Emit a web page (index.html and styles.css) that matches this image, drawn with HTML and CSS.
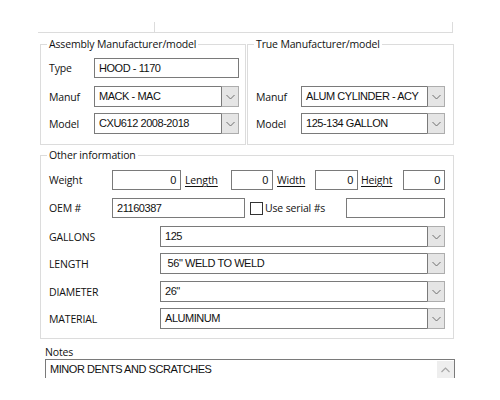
FILE: index.html
```html
<!DOCTYPE html>
<html>
<head>
<meta charset="utf-8">
<link rel="stylesheet" href="styles.css">
</head>
<body>
<div class="stub"><div class="stub-a"></div><div class="stub-b"></div></div>

<div class="groups">
  <fieldset class="grp grp-asm">
    <legend>Assembly Manufacturer/model</legend>
    <div class="row row-text">
      <span class="lbl lbl-45">Type</span>
      <div class="field w145">HOOD - 1170</div>
    </div>
    <div class="row row-combo mt8">
      <span class="lbl lbl-45">Manuf</span>
      <div class="combo w145"><div class="combo-text">MACK - MAC</div><div class="combo-btn"><svg width="9" height="6" viewBox="0 0 9 6"><polyline points="0.5,1 4.5,5 8.5,1" fill="none" stroke="#6e6e6e" stroke-width="1"/></svg></div></div>
    </div>
    <div class="row row-combo mt6">
      <span class="lbl lbl-45">Model</span>
      <div class="combo w145"><div class="combo-text">CXU612 2008-2018</div><div class="combo-btn"><svg width="9" height="6" viewBox="0 0 9 6"><polyline points="0.5,1 4.5,5 8.5,1" fill="none" stroke="#6e6e6e" stroke-width="1"/></svg></div></div>
    </div>
  </fieldset>

  <fieldset class="grp grp-true">
    <legend>True Manufacturer/model</legend>
    <div class="row row-text"></div>
    <div class="row row-combo mt8">
      <span class="lbl lbl-45">Manuf</span>
      <div class="combo w144"><div class="combo-text">ALUM CYLINDER - ACY</div><div class="combo-btn"><svg width="9" height="6" viewBox="0 0 9 6"><polyline points="0.5,1 4.5,5 8.5,1" fill="none" stroke="#6e6e6e" stroke-width="1"/></svg></div></div>
    </div>
    <div class="row row-combo mt6">
      <span class="lbl lbl-45">Model</span>
      <div class="combo w144"><div class="combo-text">125-134 GALLON</div><div class="combo-btn"><svg width="9" height="6" viewBox="0 0 9 6"><polyline points="0.5,1 4.5,5 8.5,1" fill="none" stroke="#6e6e6e" stroke-width="1"/></svg></div></div>
    </div>
  </fieldset>
</div>

<fieldset class="grp other">
  <legend>Other information</legend>
  <div class="row row-text">
    <span class="lbl lbl-63">Weight</span>
    <div class="field num w69">0</div>
    <span class="lbl ul lbl-len">Length</span>
    <div class="field num w42">0</div>
    <span class="lbl ul lbl-wid">Width</span>
    <div class="field num w43">0</div>
    <span class="lbl ul lbl-hei">Height</span>
    <div class="field num w42">0</div>
  </div>
  <div class="row row-text mt8">
    <span class="lbl lbl-63">OEM #</span>
    <div class="field w133">21160387</div>
    <span class="check"></span>
    <span class="lbl lbl-serial">Use serial #s</span>
    <div class="field w99"></div>
  </div>
  <div class="row row-combo mt8">
    <span class="lbl lbl-111">GALLONS</span>
    <div class="combo w285"><div class="combo-text">125</div><div class="combo-btn"><svg width="9" height="6" viewBox="0 0 9 6"><polyline points="0.5,1 4.5,5 8.5,1" fill="none" stroke="#6e6e6e" stroke-width="1"/></svg></div></div>
  </div>
  <div class="row row-combo mt6">
    <span class="lbl lbl-111">LENGTH</span>
    <div class="combo w285"><div class="combo-text pre"> 56" WELD TO WELD</div><div class="combo-btn"><svg width="9" height="6" viewBox="0 0 9 6"><polyline points="0.5,1 4.5,5 8.5,1" fill="none" stroke="#6e6e6e" stroke-width="1"/></svg></div></div>
  </div>
  <div class="row row-combo mt7">
    <span class="lbl lbl-111">DIAMETER</span>
    <div class="combo w285"><div class="combo-text">26"</div><div class="combo-btn"><svg width="9" height="6" viewBox="0 0 9 6"><polyline points="0.5,1 4.5,5 8.5,1" fill="none" stroke="#6e6e6e" stroke-width="1"/></svg></div></div>
  </div>
  <div class="row row-combo mt6">
    <span class="lbl lbl-111">MATERIAL</span>
    <div class="combo w285"><div class="combo-text">ALUMINUM</div><div class="combo-btn"><svg width="9" height="6" viewBox="0 0 9 6"><polyline points="0.5,1 4.5,5 8.5,1" fill="none" stroke="#6e6e6e" stroke-width="1"/></svg></div></div>
  </div>
</fieldset>

<div class="notes-lbl">Notes</div>
<div class="notes">
  <div class="notes-text">MINOR DENTS AND SCRATCHES</div>
  <div class="scroll-up"><svg width="9" height="6" viewBox="0 0 9 6"><polyline points="0.5,5 4.5,1 8.5,5" fill="none" stroke="#a6a6a6" stroke-width="1.2"/></svg></div>
</div>
</body>
</html>
```

FILE: styles.css
```css
* { box-sizing: border-box; }

html, body {
  margin: 0;
  padding: 0;
  background: #ffffff;
}

body {
  width: 500px;
  height: 400px;
  overflow: hidden;
  font-family: "Open Sans", "Noto Sans", sans-serif;
  font-size: 10.5px;
  letter-spacing: -0.15px;
  color: #111111;
}

.stub {
  display: flex;
  margin: 22px 0 0 38px;
  width: 415px;
  height: 11px;
}
.stub-a {
  width: 117px;
  border-right: 1px solid #dcdcdc;
  border-bottom: 1px solid #dcdcdc;
}
.stub-b {
  flex: 1;
  border-right: 1px solid #dcdcdc;
  border-bottom: 1px solid #dcdcdc;
}

.groups {
  display: flex;
  gap: 1px;
  margin: 4px 0 0 40px;
  width: 414px;
}

.grp {
  margin: 0;
  border: 1px solid #dcdcdc;
  min-width: 0;
}
.grp legend {
  padding: 0 2px;
  margin-left: -2px;
  line-height: 14px;
  font-size: 10.5px;
}

.grp-asm {
  width: 206px;
  padding: 7px 6px 10px 8px;
}
.grp-true {
  width: 207px;
  padding: 7px 8px 10px 8px;
}

.other {
  margin: 3px 0 0 40px;
  width: 414px;
  padding: 8px 8px 9px 8px;
}

.row {
  display: flex;
  align-items: center;
}
.row-text { height: 20px; }
.row-combo { height: 21px; }
.mt6 { margin-top: 6px; }
.mt7 { margin-top: 7px; }
.mt8 { margin-top: 8px; }

.lbl {
  flex: none;
  white-space: nowrap;
  line-height: 14px;
}
.lbl-45 { width: 45px; }
.lbl-63 { width: 63px; }
.lbl-111 { width: 111px; }
.lbl-len { width: 50px; padding-left: 4px; }
.lbl-wid { width: 42px; padding-left: 4px; }
.lbl-hei { width: 45px; padding-left: 3px; }
.lbl-serial { flex: 1; padding-left: 2px; }
.ul { text-decoration: underline; text-underline-offset: 2px; }

.field {
  flex: none;
  height: 20px;
  border: 1px solid #7a7a7a;
  background: #fff;
  font-family: "Liberation Sans", Arial, sans-serif;
  font-size: 11px;
  letter-spacing: -0.45px;
  line-height: 18px;
  padding: 0 4px;
  white-space: nowrap;
  overflow: hidden;
}
.num { text-align: right; }

.w42 { width: 42px; }
.w43 { width: 43px; }
.w69 { width: 69px; }
.w99 { width: 99px; }
.w133 { width: 133px; }
.w144 { width: 144px; }
.w145 { width: 145px; }
.w285 { width: 285px; }

.check {
  flex: none;
  width: 13px;
  height: 13px;
  margin-left: 5px;
  border: 1px solid #333333;
  background: #fff;
}

.combo {
  flex: none;
  display: flex;
  height: 21px;
}
.combo-text {
  flex: 1;
  min-width: 0;
  border: 1px solid #7a7a7a;
  border-right: none;
  font-family: "Liberation Sans", Arial, sans-serif;
  font-size: 11px;
  letter-spacing: -0.45px;
  line-height: 19px;
  padding: 0 4px;
  white-space: nowrap;
  overflow: hidden;
}
.pre { white-space: pre; }
.combo-btn {
  flex: none;
  width: 18px;
  border: 1px solid #adadad;
  border-left: 1px solid #7a7a7a;
  background: #e5e5e5;
  display: flex;
  align-items: center;
  justify-content: center;
}

.notes-lbl {
  margin: 7px 0 0 45px;
  line-height: 13px;
  height: 13px;
}
.notes {
  display: flex;
  margin-left: 45px;
  width: 410px;
  height: 19px;
  border: 1px solid #7a7a7a;
  border-bottom: none;
  overflow: hidden;
}
.notes-text {
  flex: 1;
  font-family: "Liberation Sans", Arial, sans-serif;
  font-size: 11px;
  letter-spacing: -0.45px;
  line-height: 14px;
  padding: 2px 0 0 4px;
  white-space: nowrap;
}
.scroll-up {
  flex: none;
  width: 17px;
  height: 17px;
  margin-top: 1px;
  background: #eeeeee;
  display: flex;
  align-items: center;
  justify-content: center;
}
```
